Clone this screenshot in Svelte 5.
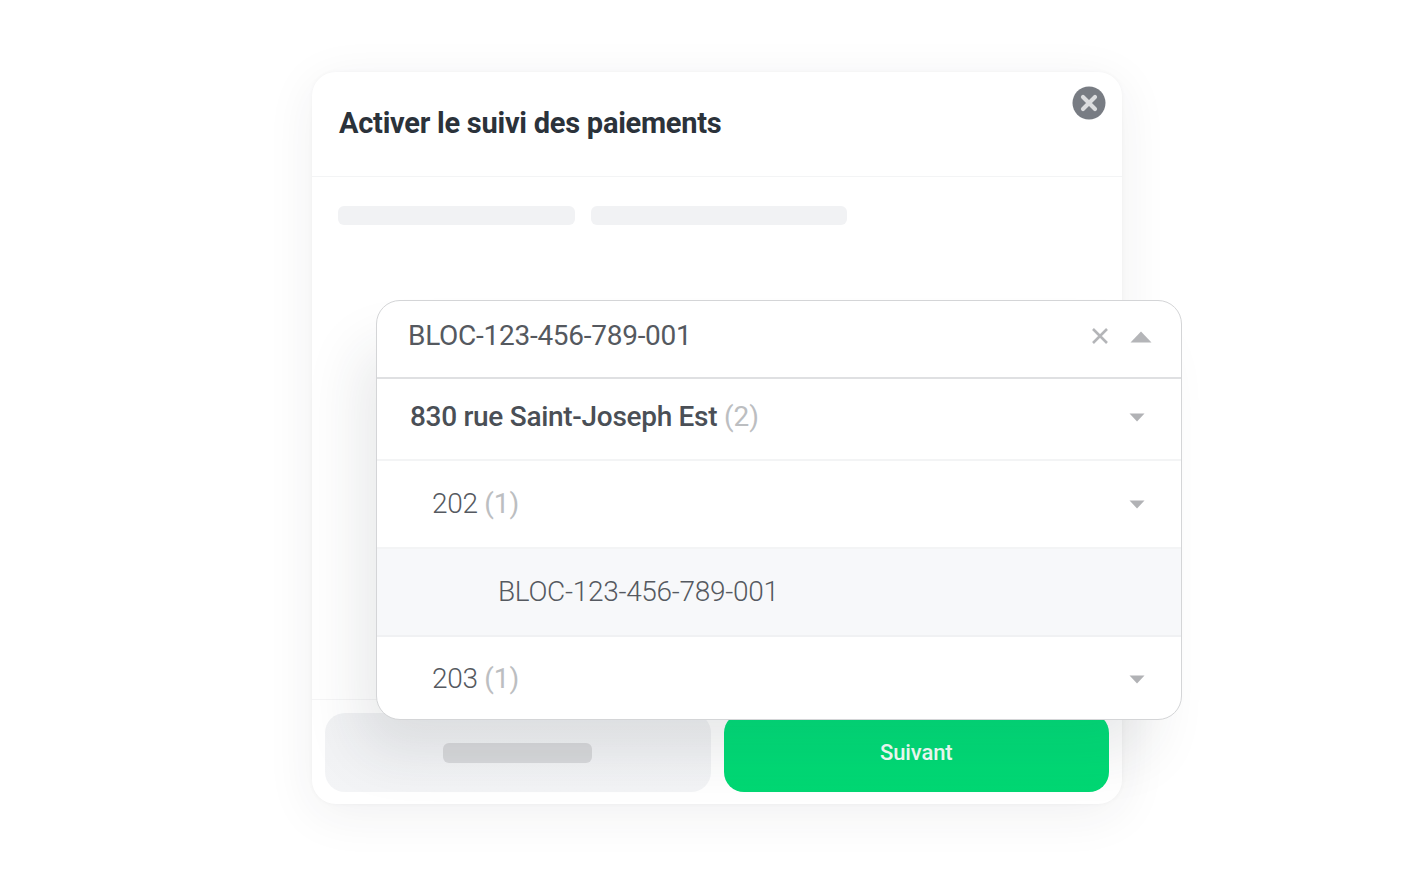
<script>
  const rows = [
    { label: '830 rue Saint-Joseph Est', count: 2, level: 'top', h: 82 },
    { label: '202', count: 1, level: 'unit', h: 88 },
    { label: 'BLOC-123-456-789-001', level: 'leaf', h: 88 },
    { label: '203', count: 1, level: 'unit last', h: 82 }
  ];
</script>

<div class="page">
  <div class="modal">
    <header class="modal-head">
      <h1>Activer le suivi des paiements</h1>
      <span class="close-btn">
        <svg viewBox="0 0 34 34" width="34" height="34" aria-hidden="true">
          <circle cx="17" cy="17" r="16.5" fill="#787c83" />
          <path d="M11 11 23 23M23 11 11 23" stroke="#dcdddf" stroke-width="4.2" stroke-linecap="round" />
        </svg>
      </span>
    </header>

    <div class="modal-body">
      <div class="tabs">
        <span class="pill first"></span>
        <span class="pill second"></span>
      </div>
    </div>

    <footer class="modal-foot">
      <div class="btn ghost"><span class="ghost-label"></span></div>
      <div class="btn primary">Suivant</div>
    </footer>

    <div class="dropdown">
      <div class="search">
        <span class="value">BLOC-123-456-789-001</span>
        <svg class="clear" viewBox="0 0 18 18" width="18" height="18" aria-hidden="true">
          <path d="M2 2 16 16M16 2 2 16" stroke="#b4b5b8" stroke-width="2.6" />
        </svg>
        <svg class="caret-up" viewBox="0 0 22 12" width="22" height="12" aria-hidden="true">
          <path d="M11 0.5 21.5 11.5H0.5Z" fill="#b4b5b8" />
        </svg>
      </div>
      {#each rows as row}
        <div class="row {row.level}" style="height: {row.h}px">
          <span class="row-label">{row.label}{#if row.count}&nbsp;<span class="count">({row.count})</span>{/if}</span>
          {#if row.count}
            <svg class="caret" viewBox="0 0 16 9" width="16" height="9" aria-hidden="true">
              <path d="M0.5 0.5H15.5L8 8.5Z" fill="#b1b2b5" />
            </svg>
          {/if}
        </div>
      {/each}
    </div>
  </div>
</div>

<style>
  :global(body) {
    margin: 0;
    background: #fff;
    font-family: Roboto, "Liberation Sans", sans-serif;
  }

  .page {
    width: 1419px;
    height: 876px;
    padding: 72px 0 0 312px;
    box-sizing: border-box;
    overflow: hidden;
  }

  .modal {
    position: relative;
    width: 810px;
    height: 732px;
    display: flex;
    flex-direction: column;
    background: #fff;
    border-radius: 24px;
    box-shadow: 0 10px 50px rgba(40, 45, 55, 0.07), 0 0 4px rgba(40, 45, 55, 0.04);
  }

  .modal-head {
    position: relative;
    height: 72px;
    padding: 32px 0 0 27px;
    border-bottom: 1px solid #f3f4f5;
  }

  h1 {
    margin: 0;
    font-size: 29px;
    line-height: 38px;
    font-weight: 700;
    letter-spacing: -0.25px;
    color: #2b323a;
  }

  .close-btn {
    position: absolute;
    top: 14px;
    right: 16px;
    width: 34px;
    height: 34px;
  }

  .modal-body {
    flex: 1;
    padding: 29px 0 0 26px;
  }

  .tabs {
    display: flex;
    gap: 16px;
  }

  .pill {
    height: 19px;
    border-radius: 6px;
    background: #f1f2f4;
  }

  .first { width: 237px; }
  .second { width: 256px; }

  .modal-foot {
    display: flex;
    gap: 13px;
    padding: 13px 13px 12px;
    border-top: 1px solid #f5f5f6;
  }

  .btn {
    flex: 1;
    height: 79px;
    border-radius: 20px;
    display: flex;
    align-items: center;
    justify-content: center;
  }

  .ghost {
    background: linear-gradient(#f1f2f4, #f3f4f6);
  }

  .ghost-label {
    width: 149px;
    height: 20px;
    border-radius: 6px;
    background: #d8d9db;
  }

  .primary {
    background: linear-gradient(#00e07a, #00d873);
    color: #f2fff8;
    font-size: 22px;
    font-weight: 500;
    letter-spacing: -0.1px;
  }

  .dropdown {
    position: absolute;
    top: 228px;
    left: 64px;
    width: 806px;
    box-sizing: border-box;
    background: #fff;
    border: 1px solid #d4d5d7;
    border-radius: 24px;
    box-shadow: -24px 40px 60px -10px rgba(40, 45, 55, 0.11);
  }

  .search {
    box-sizing: border-box;
    height: 78px;
    display: flex;
    align-items: center;
    padding: 0 29px 8px 31px;
    border-bottom: 2px solid #dfe0e2;
  }

  .value {
    flex: 1;
    font-size: 28px;
    font-weight: 400;
    letter-spacing: -0.27px;
    color: #55595f;
  }

  .clear {
    margin: 2px 21px 0 0;
  }

  .caret-up {
    margin-top: 4px;
  }

  .row {
    box-sizing: border-box;
    display: flex;
    align-items: center;
    justify-content: space-between;
    padding-right: 36px;
    border-bottom: 2px solid #f3f4f5;
    font-size: 28px;
    font-weight: 300;
    color: #555960;
    letter-spacing: -0.3px;
  }

  .row-label {
    margin-bottom: 2px;
  }

  .top {
    padding-left: 33px;
    padding-bottom: 4px;
    font-weight: 500;
    color: #4a4f56;
  }

  .unit {
    padding-left: 55px;
  }

  .leaf {
    padding-left: 121px;
    background: #f7f8fa;
    border-bottom-color: #f0f1f3;
  }

  .last {
    border-bottom: 0;
    border-radius: 0 0 24px 24px;
  }

  .last .row-label {
    margin-bottom: 0;
  }

  .last .caret {
    margin-top: 2px;
  }

  .count {
    font-weight: 400;
    letter-spacing: 0;
    color: #bcbec1;
  }
</style>
